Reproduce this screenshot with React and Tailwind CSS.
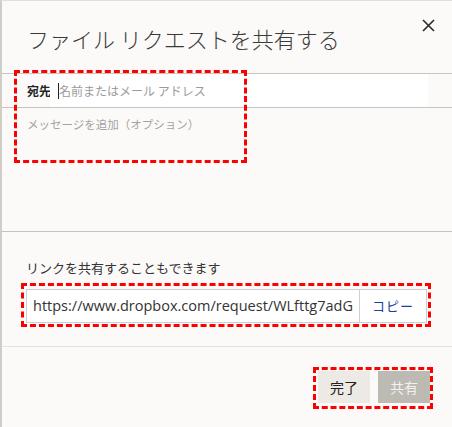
import React from 'react'

const jp = { fontFamily: '"Noto Sans CJK JP", "Noto Sans", sans-serif' }

export default function App() {
    return (
        <div
            className="relative h-[427px] w-[452px] overflow-hidden border-l-2 border-t border-l-[#d0cdc7] border-t-[#e2dfda] bg-[#fbfaf8] text-[#333]"
            style={jp}
        >
            <div className="relative flex h-[72px] items-start pl-[25px] pt-[22px]">
                <h1 className="text-[22px] font-light leading-[30px] text-[#3a3a3a]">
                    ファイル リクエストを共有する
                </h1>
                <button className="absolute right-[16px] top-[16px] flex h-[16px] w-[16px] items-center justify-center text-[#2a2a2a]">
                    <svg width="13" height="13" viewBox="0 0 13 13">
                        <path d="M1 1L12 12M12 1L1 12" stroke="currentColor" strokeWidth="1.6" />
                    </svg>
                </button>
            </div>

            <div className="flex h-[35px] items-center border-y border-[#c8c5bf]">
                <span className="w-[48px] shrink-0 whitespace-nowrap pl-[25px] text-[12px] font-bold text-[#222]">
                    宛先
                </span>
                <div className="flex h-full w-[378px] items-center bg-white">
                    <span className="ml-[8px] h-[16px] w-px bg-[#222]" />
                    <span className="text-[12px] text-[#9b9b9b]">名前またはメール アドレス</span>
                </div>
            </div>

            <div className="h-[124px] border-b border-[#c6c3bd] pl-[25px] pt-[8px]">
                <p className="text-[11.5px] text-[#a3a3a3]">メッセージを追加（オプション）</p>
            </div>

            <div className="h-[115px] border-b border-[#e6e3dd] px-[24px] pt-[26px]">
                <p className="text-[13px] text-[#333]">リンクを共有することもできます</p>
                <div className="mt-[11px] flex h-[34px] w-[401px] items-center border border-[#cdcfd3] bg-white">
                    <span
                        className="flex-1 overflow-hidden whitespace-nowrap pl-[6px] text-[14.5px] text-[#333]"
                        style={{ fontFamily: '"Open Sans", "Liberation Sans", sans-serif' }}
                    >
                        https://www.dropbox.com/request/WLfttg7adG
                    </span>
                    <span className="flex h-full w-[67px] items-center justify-center border-l border-[#cdcfd3] text-[13px] tracking-[1px] text-[#1f3f9f]">
                        コピー
                    </span>
                </div>
            </div>

            <div className="flex justify-end gap-[8px] pr-[22px] pt-[24px]">
                <button className="h-[32px] w-[52px] bg-[#edeae6] text-[14px] text-[#222]">完了</button>
                <button className="h-[32px] w-[52px] bg-[#bdb9b3] text-[14px] text-[#f2f1ef]">共有</button>
            </div>

            <div className="pointer-events-none absolute left-[12px] top-[69px] h-[93px] w-[233px] border-[3px] border-dashed border-[#ff0000]" />
            <div className="pointer-events-none absolute left-[19px] top-[282px] h-[44px] w-[410px] border-[3px] border-dashed border-[#ff0000]" />
            <div className="pointer-events-none absolute left-[311px] top-[366px] h-[42px] w-[120px] border-[3px] border-dashed border-[#ff0000]" />
        </div>
    )
}
